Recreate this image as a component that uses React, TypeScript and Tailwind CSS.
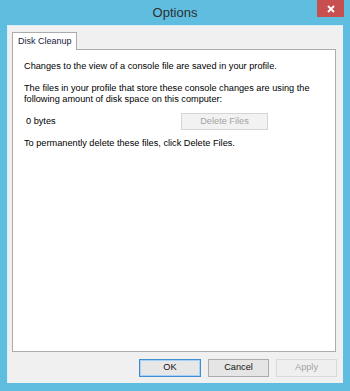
import React from "react";

const font = { fontFamily: '"Liberation Sans", Arial, sans-serif' };

export default function App() {
  return (
    <div
      className="w-[350px] h-[391px] bg-[#5fbde0] flex flex-col"
      style={font}
    >
      {/* Title bar */}
      <div className="h-[25px] flex items-start">
        <div className="w-[33px]" />
        <div className="flex-1 flex justify-center pt-[5px] text-[13px] leading-[16px] text-[#2e2e2e]">
          Options
        </div>
        <div className="w-[27px] h-[17px] bg-[#c74f50] mr-[6px] flex items-center justify-center">
          <svg width="8" height="8" viewBox="0 0 8 8">
            <path d="M1 1 L7 7 M7 1 L1 7" stroke="white" strokeWidth="1.8" />
          </svg>
        </div>
      </div>

      {/* Client area */}
      <div className="mx-[7px] h-[358px] bg-[#f0f0f0] border-l border-t border-[#d9eef7] flex flex-col pl-[4px] pr-[6px] pt-[6px] whitespace-nowrap">
        {/* Tab */}
        <div className="flex">
          <div className="h-[18px] w-[65px] bg-white border border-b-0 border-[#acacac] text-[9px] leading-[16px] pl-[5px] text-[#1a1a40] relative z-10 -mb-px">
            Disk Cleanup
          </div>
        </div>
        {/* Panel */}
        <div className="h-[303px] w-[324px] bg-white border border-[#acacac] pl-[11px] pt-[11px] text-[9.2px] leading-[11px] text-black">
          <div className="h-[11px]">
            Changes to the view of a console file are saved in your profile.
          </div>
          <div className="mt-[11px] flex flex-col">
            <div className="h-[11px]">
              The files in your profile that store these console changes are using the
            </div>
            <div className="h-[11px]">
              following amount of disk space on this computer:
            </div>
          </div>
          <div className="mt-[8px] flex items-center h-[17px]">
            <div className="w-[157px] pl-[2px]">0 bytes</div>
            <div className="w-[87px] h-[17px] border border-[#d4d4d4] bg-[#f2f2f2] text-[#a3a3a3] flex items-center justify-center">
              Delete Files
            </div>
          </div>
          <div className="mt-[8px] h-[11px]">
            To permanently delete these files, click Delete Files.
          </div>
        </div>
        {/* Buttons */}
        <div className="mt-[7px] flex justify-end gap-[7px] text-[9.2px]">
          <div className="w-[62px] h-[18px] border border-[#3f8ed3] bg-[#e7e7e7] shadow-[inset_0_0_0_1px_#a8d1f3] flex items-center justify-center text-[#111]">
            OK
          </div>
          <div className="w-[61px] h-[18px] border border-[#acacac] bg-[#e5e5e5] flex items-center justify-center text-[#111]">
            Cancel
          </div>
          <div className="w-[61px] h-[18px] border border-[#d9d9d9] bg-[#efefef] flex items-center justify-center text-[#a3a3a3]">
            Apply
          </div>
        </div>
      </div>
    </div>
  );
}
